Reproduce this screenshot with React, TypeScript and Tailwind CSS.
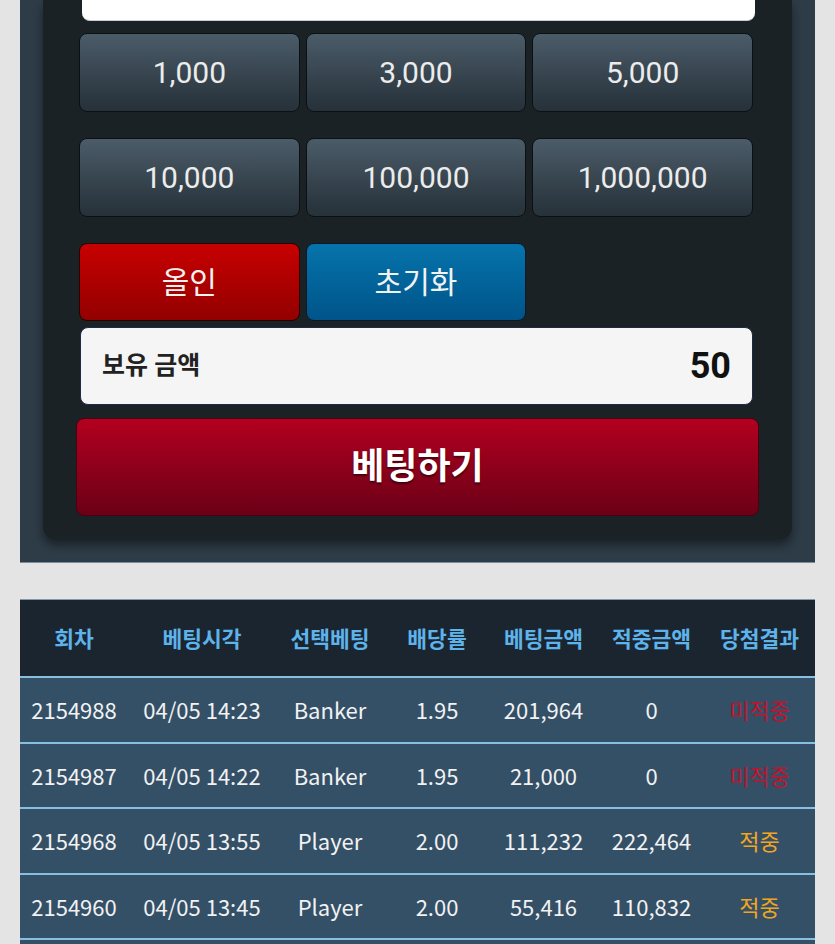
import React from "react";

const chips = ["1,000", "3,000", "5,000", "10,000", "100,000", "1,000,000"];

const history = [
  { round: "2154988", time: "04/05 14:23", pick: "Banker", odds: "1.95", bet: "201,964", win: "0", result: "미적중" },
  { round: "2154987", time: "04/05 14:22", pick: "Banker", odds: "1.95", bet: "21,000", win: "0", result: "미적중" },
  { round: "2154968", time: "04/05 13:55", pick: "Player", odds: "2.00", bet: "111,232", win: "222,464", result: "적중" },
  { round: "2154960", time: "04/05 13:45", pick: "Player", odds: "2.00", bet: "55,416", win: "110,832", result: "적중" },
];

const headers = ["회차", "베팅시각", "선택베팅", "배당률", "베팅금액", "적중금액", "당첨결과"];

const gridCols = "grid grid-cols-[108px_148px_108px_106px_107px_109px_107px]";

const App = () => {
  return (
    <div className="min-h-screen bg-[#e4e4e4] font-['Roboto','Noto_Sans_CJK_KR',sans-serif]">
      {/* Betting panel */}
      <div className="mx-[20px] bg-[#2e3c47] border-b border-[#7b8c98] px-[23px] pb-[23px]">
        <div className="rounded-b-[12px] bg-[#1b2226] shadow-[0_6px_10px_rgba(0,0,0,0.45)] pl-[36px] pr-[39px] pb-[23px]">
          <div className="ml-[3px] mr-[-2px] h-[21px] rounded-b-[8px] bg-white border-b border-[#c9ced3]" />

          <div className="mt-[12px] grid grid-cols-3 gap-x-[6px] gap-y-[26px]">
            {chips.map((c) => (
              <button
                key={c}
                className="h-[79px] rounded-[8px] border border-[#0c1013] bg-linear-to-b from-[#4b5c69] to-[#263139] text-[30px] text-[#ececec]"
              >
                {c}
              </button>
            ))}
          </div>

          <div className="mt-[26px] grid grid-cols-3 gap-x-[6px]">
            <button className="h-[78px] rounded-[8px] border border-[#2a0000] bg-linear-to-b from-[#c80000] to-[#930000] text-[30px] text-[#f2f2f2]">
              올인
            </button>
            <button className="h-[78px] rounded-[8px] border border-[#0a1a2a] bg-linear-to-b from-[#0674ab] to-[#00548a] text-[30px] text-[#f2f2f2]">
              초기화
            </button>
          </div>

          <div className="mt-[6px] ml-[1px] h-[78px] rounded-[8px] border border-[#1e2b48] bg-[#f5f5f5] flex items-center justify-between pl-[21px] pr-[21px]">
            <span className="text-[25px] font-bold text-[#222]">보유 금액</span>
            <span className="text-[36px] font-bold text-[#111]">50</span>
          </div>

          <button className="mt-[13px] ml-[-3px] w-[calc(100%+9px)] h-[98px] rounded-[8px] border border-[#4a000e] bg-linear-to-b from-[#b3001f] to-[#6b0016] text-[36px] font-bold text-white [text-shadow:0_2px_2px_rgba(0,0,0,0.5)]">
            베팅하기
          </button>
        </div>
      </div>

      {/* History table */}
      <div className="mx-[20px] mt-[36px] font-['Noto_Sans_CJK_KR','Noto_Sans',sans-serif]">
        <div className={`${gridCols} h-[77px] items-center bg-[#1b2530] border-t border-[#8497a6]`}>
          {headers.map((h) => (
            <div key={h} className="text-center text-[21.5px] font-bold text-[#5db3ea]">
              {h}
            </div>
          ))}
        </div>
        {history.map((r) => (
          <div
            key={r.round}
            className={`${gridCols} h-[65.5px] items-center bg-[#345067] border-t-2 border-[#86bfe0] text-[22px] text-[#f2f2f2]`}
          >
            <div className="text-center">{r.round}</div>
            <div className="text-center">{r.time}</div>
            <div className="text-center">{r.pick}</div>
            <div className="text-center">{r.odds}</div>
            <div className="text-center">{r.bet}</div>
            <div className="text-center">{r.win}</div>
            <div className={`text-center ${r.result === "적중" ? "text-[#f2a51e]" : "text-[#c4112b]"}`}>
              {r.result}
            </div>
          </div>
        ))}
        <div className="h-[65.5px] bg-[#345067] border-t-2 border-[#86bfe0]" />
      </div>
    </div>
  );
};

export default App;
